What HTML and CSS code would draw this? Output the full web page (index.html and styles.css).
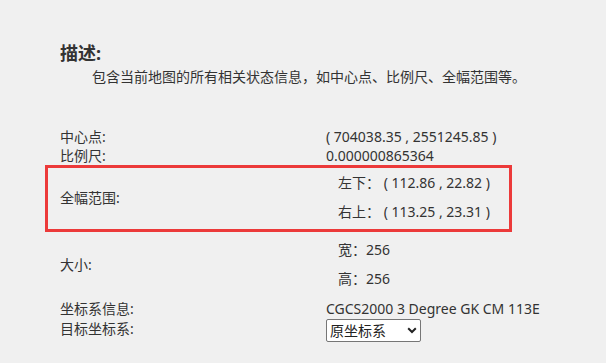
FILE: index.html
```html
<!DOCTYPE html>
<html lang="zh-CN">
<head>
<meta charset="utf-8">
<title>地图状态</title>
<link rel="stylesheet" href="styles.css">
</head>
<body>
<div class="page">
  <h2 class="title">描述:</h2>
  <p class="desc">包含当前地图的所有相关状态信息，如中心点、比例尺、全幅范围等。</p>
  <div class="props">
    <div class="row first">
      <div class="label">中心点:</div>
      <div class="value">( 704038.35 , 2551245.85 )</div>
    </div>
    <div class="row">
      <div class="label">比例尺:</div>
      <div class="value">0.000000865364</div>
    </div>
    <div class="row group highlight">
      <div class="label">全幅范围:</div>
      <div class="value stack">
        <div>左下： ( 112.86 , 22.82 )</div>
        <div>右上： ( 113.25 , 23.31 )</div>
      </div>
    </div>
    <div class="row group size">
      <div class="label">大小:</div>
      <div class="value stack">
        <div>宽：256</div>
        <div>高：256</div>
      </div>
    </div>
    <div class="row crs">
      <div class="label">坐标系信息:</div>
      <div class="value">CGCS2000 3 Degree GK CM 113E</div>
    </div>
    <div class="row target">
      <div class="label">目标坐标系:</div>
      <div class="value">
        <div class="select-wrap">
          <select class="select">
            <option>原坐标系</option>
          </select>
          <svg class="chev" width="10" height="7" viewBox="0 0 10 7"><path d="M1.2 1.3 L5 5 L8.8 1.3" fill="none" stroke="#222" stroke-width="2"/></svg>
        </div>
      </div>
    </div>
  </div>
</div>
</body>
</html>
```
FILE: styles.css
```css
html, body {
  margin: 0;
  padding: 0;
  background: #f0f0f0;
}
body {
  font-family: "Noto Sans", "Noto Sans CJK SC", sans-serif;
  color: #333;
  font-size: 14px;
}
.page {
  padding: 42px 0 0 60px;
}
.title {
  margin: 0;
  font-size: 18px;
  line-height: 22px;
  font-weight: bold;
  color: #333;
}
.desc {
  margin: 3px 0 0 32px;
  font-size: 14px;
  line-height: 20px;
}
.props {
  margin-top: 40px;
}
.row {
  display: grid;
  grid-template-columns: 266px auto;
  line-height: 19px;
}
.group .label {
  align-self: center;
}
.stack {
  display: flex;
  flex-direction: column;
  padding-left: 12px;
}
.highlight {
  margin-left: -15px;
  width: 467px;
  box-sizing: border-box;
  border: 3px solid #ec3a3a;
  padding: 5px 0 8px 12px;
}
.highlight .stack {
  gap: 10px;
}
.size {
  margin-top: 8px;
}
.size .stack {
  gap: 10px;
}
.crs {
  margin-top: 11px;
}
.target {
  margin-top: 1px;
}
.select-wrap {
  position: relative;
  width: 95px;
  height: 23px;
}
.select {
  appearance: none;
  -webkit-appearance: none;
  width: 95px;
  height: 23px;
  box-sizing: border-box;
  margin: 0;
  padding: 0 0 0 3px;
  border: 1px solid #767676;
  border-radius: 2px;
  background: #fff;
  font-family: "Noto Sans", "Noto Sans CJK SC", sans-serif;
  font-size: 14px;
  color: #222;
}
.chev {
  position: absolute;
  left: 81px;
  top: 8px;
  pointer-events: none;
}
```
